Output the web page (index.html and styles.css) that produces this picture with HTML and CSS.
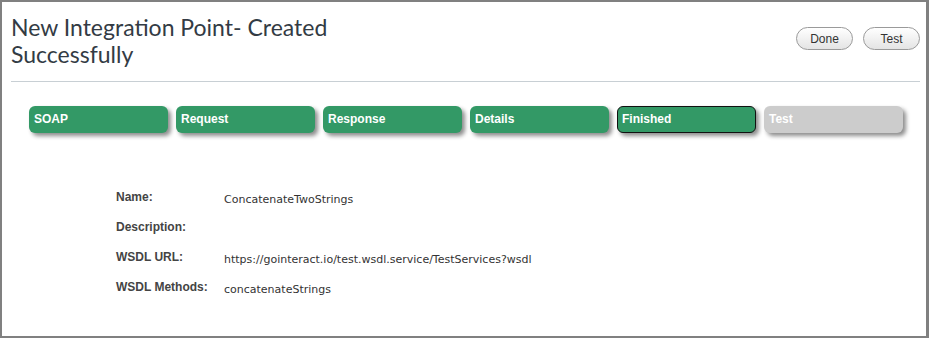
FILE: index.html
```html
<!DOCTYPE html>
<html>
<head>
<meta charset="utf-8">
<title>New Integration Point</title>
<link rel="stylesheet" href="styles.css">
</head>
<body>
  <div class="frame">
    <div class="header">
      <h1 class="title">New Integration Point- Created Successfully</h1>
      <div class="actions">
        <button class="pill">Done</button>
        <button class="pill">Test</button>
      </div>
    </div>
    <div class="rule"></div>

    <div class="steps">
      <div class="step">SOAP</div>
      <div class="step">Request</div>
      <div class="step">Response</div>
      <div class="step">Details</div>
      <div class="step current">Finished</div>
      <div class="step disabled">Test</div>
    </div>

    <div class="summary">
      <div class="row">
        <div class="label">Name:</div>
        <div class="value">ConcatenateTwoStrings</div>
      </div>
      <div class="row">
        <div class="label">Description:</div>
        <div class="value"></div>
      </div>
      <div class="row">
        <div class="label">WSDL URL:</div>
        <div class="value">https://gointeract.io/test.wsdl.service/TestServices?wsdl</div>
      </div>
      <div class="row">
        <div class="label">WSDL Methods:</div>
        <div class="value">concatenateStrings</div>
      </div>
    </div>
  </div>
</body>
</html>
```

FILE: styles.css
```css
* {
  box-sizing: border-box;
}
html, body {
  height: 100%;
}
body {
  margin: 0;
  background: #fff;
  font-family: "DejaVu Sans", Verdana, sans-serif;
}
.frame {
  height: 338px;
  border: 2px solid #808080;
  border-right-width: 3px;
  padding: 0 6px 0 9px;
}

.header {
  display: flex;
  justify-content: space-between;
  align-items: flex-start;
  padding-top: 12px;
}
.title {
  width: 340px;
  margin: 0;
  font-family: Lato, sans-serif;
  font-weight: normal;
  font-size: 23px;
  line-height: 27px;
  color: #333b44;
}
.actions {
  display: flex;
  gap: 10px;
  padding-top: 13px;
}
.pill {
  height: 23px;
  width: 57px;
  border: 1px solid #9a9a9a;
  border-radius: 12px;
  background: linear-gradient(#ffffff, #e4e4e4);
  font-family: "Liberation Sans", Arial, sans-serif;
  font-size: 12px;
  color: #333;
  padding: 0;
}
.rule {
  margin-top: 13px;
  height: 1px;
  background: #c8cfd4;
}

.steps {
  display: flex;
  gap: 8px;
  padding: 24px 0 0 18px;
}
.step {
  width: 139px;
  height: 27px;
  line-height: 27px;
  padding-left: 5px;
  border-radius: 6px;
  background: #339966;
  color: #fff;
  font-family: "Liberation Sans", Arial, sans-serif;
  font-size: 12px;
  font-weight: bold;
  box-shadow: 3px 3px 4px rgba(0, 0, 0, 0.45);
}
.step.current {
  border: 1px solid #111;
  line-height: 25px;
  padding-left: 4px;
}
.step.disabled {
  background: #cccccc;
}

.summary {
  padding: 57px 0 0 105px;
}
.row {
  display: flex;
  height: 30px;
}
.label {
  width: 108px;
  font-family: "Liberation Sans", Arial, sans-serif;
  font-size: 12px;
  font-weight: bold;
  color: #444;
}
.value {
  padding-top: 3px;
  font-size: 11px;
  color: #333;
}
```
